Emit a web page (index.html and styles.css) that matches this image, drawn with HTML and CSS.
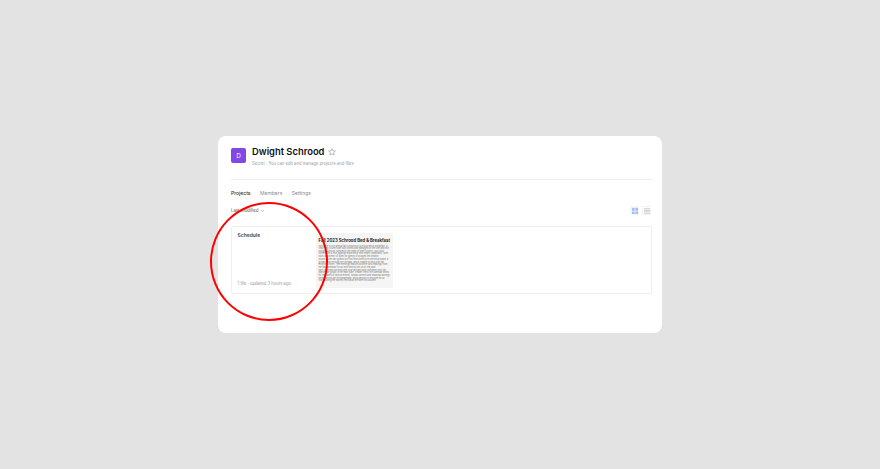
FILE: index.html
```html
<!DOCTYPE html>
<html lang="en">
<head>
<meta charset="utf-8">
<title>Dwight Schrood</title>
<link rel="stylesheet" href="styles.css">
</head>
<body>
<main class="panel">
  <header class="head">
    <div class="avatar">D</div>
    <div class="head-text">
      <div class="title-row">
        <h1 class="title">Dwight Schrood</h1>
        <svg class="star" viewBox="0 0 10 10" width="8" height="8"><path d="M5 .8l1.25 2.7 2.95.35-2.2 2 .6 2.9L5 7.3 2.4 8.75l.6-2.9-2.2-2 2.95-.35z" fill="none" stroke="#8a8a8a" stroke-width=".7"/></svg>
      </div>
      <p class="sub">Secret · You can edit and manage projects and files</p>
    </div>
  </header>
  <nav class="tabs">
    <span class="tab active">Projects</span>
    <span class="tab">Members</span>
    <span class="tab">Settings</span>
  </nav>
  <div class="toolbar">
    <span class="sort">Last modified <svg viewBox="0 0 6 4" width="3" height="2"><path d="M.5.5L3 3 5.500.5" fill="none" stroke="#666" stroke-width="1"/></svg></span>
    <div class="views">
      <span class="view on"><svg viewBox="0 0 8 8" width="6" height="6"><path d="M0 0h3.500v3.500H0zM4.500 0H8v3.500H4.500zM0 4.500h3.500V8H0zM4.500 4.500H8V8H4.500z" fill="#a9bfe8"/></svg></span>
      <span class="view"><svg viewBox="0 0 8 8" width="6" height="6"><path d="M0 1h8M0 3h8M0 5h8M0 7h8" stroke="#bdbdbd" stroke-width="1"/></svg></span>
    </div>
  </div>
  <section class="card">
    <div class="card-info">
      <h2 class="card-title">Schedule</h2>
      <p class="card-meta">1 file · updated 3 hours ago</p>
    </div>
    <div class="preview">
      <h3 class="doc-title">Fall 2023 Schrood Bed &amp; Breakfast</h3>
      <p class="doc-p">Welcome to our annual fall schedule at Schrood Bed &amp; Breakfast, a charming countryside stay owned and managed by the one and only Dwight Schrood. Nestled in the heart of beet country, our rustic rooms offer a true agrarian experience with hearty breakfasts, farm tours and plenty of quiet for guests of all ages this season.</p>
      <p class="doc-p">On any given day guests will find fresh beet juice served at dawn, a guided walk through the orchard, and a chance to help with the morning chores. The evenings feature a bonfire and readings from the farm almanac for all who wish to join us by the barn.</p>
      <p class="doc-p">Each weekend we welcome local artisans and craftsmen who sell handmade goods in the main barn. Please check the calendar below for the dates of special events, holiday dinners and seasonal tastings. Reservations are recommended, and a deposit is required for all stays during the harvest festival at the farm this autumn.</p>
    </div>
  </section>
</main>
<div class="circle" aria-hidden="true"></div>
</body>
</html>
```
FILE: styles.css
```css
* { box-sizing: border-box; }
html, body { height: 100%; }
body {
  margin: 0;
  background: #e3e3e3;
  font-family: Inter, "Liberation Sans", sans-serif;
  color: #1a1a1a;
  overflow: hidden;
  position: relative;
}
.panel {
  position: relative;
  left: 218px;
  top: 136px;
  width: 444px;
  height: 197px;
  background: #fff;
  border-radius: 8px;
  padding: 12px 10px 0 13px;
}
.head {
  display: flex;
  align-items: flex-start;
  gap: 6px;
  height: 32px;
  border-bottom: 1px solid #efefef;
}
.avatar {
  width: 15px;
  height: 15px;
  border-radius: 2px;
  background: #8247e5;
  color: #e9defa;
  font-size: 6.500px;
  font-weight: 500;
  display: flex;
  align-items: center;
  justify-content: center;
}
.head-text { margin-top: -3px; }
.title-row { display: flex; align-items: center; gap: 4px; }
.title { margin: 0; font-size: 9.400px; line-height: 13px; font-weight: 600; color: #111; }
.star { display: block; }
.sub { margin: 3px 0 0; font-size: 4.200px; line-height: 5px; color: #999; }
.tabs { display: flex; gap: 9.500px; margin-top: 10px; height: 6px; align-items: center; }
.tab { font-size: 5px; color: #8c8c8c; }
.tab.active { color: #333; font-weight: 500; }
.toolbar { display: flex; justify-content: space-between; align-items: center; margin-top: 10px; height: 9px; }
.sort { font-size: 4.300px; color: #555; display: flex; align-items: center; gap: 2px; }
.views { display: flex; gap: 3px; margin-right: 1px; }
.view { width: 9px; height: 9px; display: flex; align-items: center; justify-content: center; border-radius: 1px; border: 1px solid #f2f2f2; }
.view.on { background: #eef2fb; border-color: #f2f5fc; }
.card {
  margin-top: 11px;
  height: 68px;
  border: 1px solid #efefef;
  border-radius: 2px;
  display: flex;
  padding: 6px 0 5px 5.500px;
}
.card-info { width: 78px; display: flex; flex-direction: column; justify-content: space-between; }
.card-title { margin: -2.500px 0 0; font-size: 5px; line-height: 8px; font-weight: 600; color: #444; }
.card-meta { margin: 0 0 1px; font-size: 4.200px; line-height: 6px; color: #999; white-space: nowrap; }
.preview { width: 77px; height: 55px; background: #f5f5f5; border-radius: 2px; padding: 5px 2px 0 3px; overflow: hidden; }
.doc-title { margin: 0 0 1.500px; font-size: 4.250px; line-height: 6px; font-weight: 700; color: #222; white-space: nowrap; }
.doc-p { margin: 0 0 .5px; font-size: 2.200px; line-height: 2.600px; color: #777; }
.circle {
  position: absolute;
  left: 210px;
  top: 202px;
  width: 118px;
  height: 119px;
  border: 2px solid #f00;
  border-radius: 50%;
  pointer-events: none;
}
```
